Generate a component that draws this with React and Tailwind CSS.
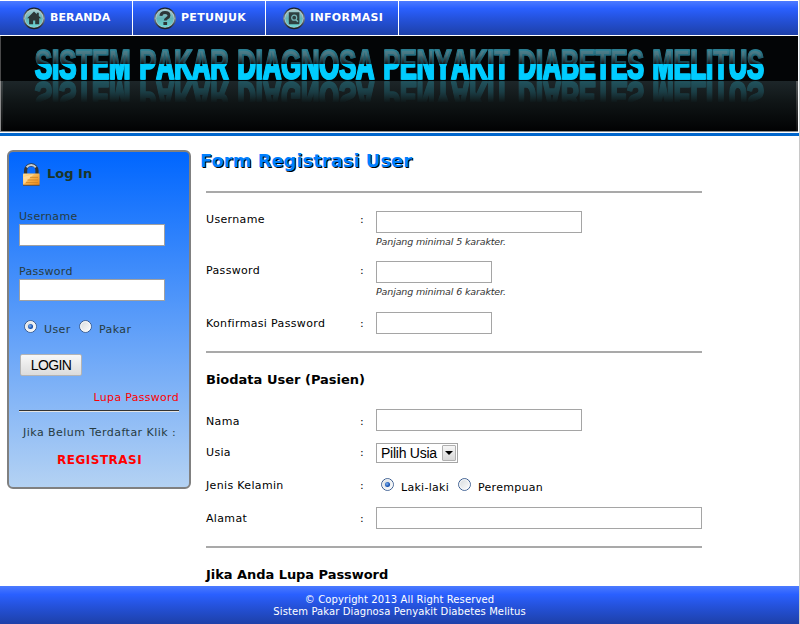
import React from "react";

const BAR =
  "bg-[linear-gradient(to_bottom,#4c7bff_0%,#2a60ff_22%,#2553de_50%,#1d40a8_100%)]";

function HomeGlyph() {
  return (
    <path
      d="M11 4.6 4.2 11.2h1.9v6h4v-3.8h2.1v3.8h4v-6h1.9l-2.3-2.3V5.8h-2v1.4z"
      fill="#2c3637"
    />
  );
}

function HelpGlyph() {
  return (
    <g>
      <path
        d="M6.9 8.9c.1-2.3 1.8-3.4 4.1-3.4 2.4 0 4 1.1 4 3 0 2.7-3.8 2.5-3.8 5"
        fill="none"
        stroke="#2c3637"
        strokeWidth="2.9"
      />
      <rect x="9.4" y="15" width="3.7" height="3" fill="#2c3637" />
    </g>
  );
}

function InfoGlyph() {
  return (
    <g>
      <path d="M5.8 5.2h10.6v11c0 .6-.5 1-1 1H5.8z" fill="#2f4041" />
      <circle cx="11.2" cy="10.7" r="2.5" fill="none" stroke="#77b7b9" strokeWidth="1.2" />
      <path d="m13 12.7 1.9 2" stroke="#77b7b9" strokeWidth="1.4" />
    </g>
  );
}

function NavIcon({ id, children }) {
  return (
    <svg width="22" height="23" viewBox="0 0 22 23" className="shrink-0">
      <defs>
        <linearGradient id={`${id}-ring`} x1="0" y1="0" x2="0" y2="1">
          <stop offset="0" stopColor="#101820" />
          <stop offset=".5" stopColor="#7c8b92" />
          <stop offset="1" stopColor="#12181c" />
        </linearGradient>
        <linearGradient id={`${id}-face`} x1="0" y1="0" x2="0" y2="1">
          <stop offset="0" stopColor="#a9cdd0" />
          <stop offset=".5" stopColor="#63b3b6" />
          <stop offset="1" stopColor="#6cd6d5" />
        </linearGradient>
      </defs>
      <circle cx="11" cy="11.4" r="10.9" fill={`url(#${id}-ring)`} />
      <circle cx="11" cy="11.2" r="9.5" fill="#b9c9cb" />
      <circle cx="11" cy="11.4" r="8.8" fill={`url(#${id}-face)`} />
      {children}
    </svg>
  );
}

function NavItem({ className, labelClass, label, id, children }) {
  return (
    <div className={`flex h-[34px] shrink-0 border-r border-white ${className}`}>
      <div className="pt-[6px]">
        <NavIcon id={id}>{children}</NavIcon>
      </div>
      <span
        className={`ml-[5px] pt-[10px] text-[11px] leading-[14px] font-bold text-white ${labelClass}`}
      >
        {label}
      </span>
    </div>
  );
}

// Each word: text, left edge, drawn width, natural advance in em.
const WORDS = [
  ["SISTEM", 34.5, 95.5, 3.723],
  ["PAKAR", 139, 89, 3.555],
  ["DIAGNOSA", 237, 137, 5.389],
  ["PENYAKIT", 383, 126, 5.056],
  ["DIABETES", 517.5, 126, 5.056],
  ["MELITUS", 652, 111.5, 4.389],
];

const SIZE = 42.5;

function Banner() {
  return (
    <svg width="798" height="96" viewBox="0 0 798 96" className="block">
      <defs>
        <linearGradient id="words" gradientUnits="userSpaceOnUse" x1="0" y1="-31" x2="0" y2="1">
          <stop offset="0" stopColor="#4a8b9b" />
          <stop offset=".22" stopColor="#49717b" />
          <stop offset=".49" stopColor="#17191b" />
          <stop offset=".5" stopColor="#00ccff" />
          <stop offset="1" stopColor="#00ccff" />
        </linearGradient>
        <linearGradient id="edge" gradientUnits="userSpaceOnUse" x1="0" y1="-31" x2="0" y2="1">
          <stop offset="0" stopColor="#2f8ba0" />
          <stop offset=".49" stopColor="#15414d" />
          <stop offset=".5" stopColor="#00ccff" />
          <stop offset="1" stopColor="#00ccff" />
        </linearGradient>
        <linearGradient id="fade" x1="0" y1="1" x2="0" y2="0">
          <stop offset="0" stopColor="#fff" stopOpacity=".48" />
          <stop offset=".35" stopColor="#fff" stopOpacity=".3" />
          <stop offset=".65" stopColor="#fff" stopOpacity="0" />
        </linearGradient>
        <mask id="fade-mask" maskUnits="userSpaceOnUse" x="0" y="10" width="798" height="35">
          <rect y="10" width="798" height="35" fill="url(#fade)" />
        </mask>
        <linearGradient id="floor" x1="0" y1="0" x2="0" y2="1">
          <stop offset="0" stopColor="#1d2629" />
          <stop offset=".4" stopColor="#101617" />
          <stop offset="1" stopColor="#010203" />
        </linearGradient>
        <linearGradient id="side" x1="0" y1="0" x2="0" y2="1">
          <stop offset="0" stopColor="#8c8c8c" />
          <stop offset="1" stopColor="#222" />
        </linearGradient>
        <filter id="heavy" colorInterpolationFilters="sRGB">
          <feOffset in="SourceGraphic" dx="1" dy="0" result="shifted" />
          <feMerge>
            <feMergeNode in="shifted" />
            <feMergeNode in="SourceGraphic" />
          </feMerge>
        </filter>
        <filter id="tint" x="0" y="0" width="1" height="1">
          <feFlood floodColor="#26899d" />
          <feComposite in2="SourceAlpha" operator="in" />
        </filter>
      </defs>
      <rect width="798" height="96" fill="#030506" />
      <rect y="45" width="798" height="50" fill="url(#floor)" />
      <rect width="1" height="95" fill="#4a4a4a" />
      <rect y="45" width="1" height="50" fill="#8c8c8c" />
      <rect x="1" y="45" width="2" height="50" fill="url(#side)" opacity=".3" />
      <rect x="796" y="45" width="2" height="50" fill="url(#side)" opacity=".5" />
      <g
        id="banner-words"
        fontFamily="'Liberation Sans', Arial, sans-serif"
        fontWeight="700"
        fontSize={SIZE}
        fill="url(#words)"
        stroke="url(#edge)"
        strokeWidth="1.6"
        filter="url(#heavy)"
        style={{ fontKerning: "none" }}
      >
        {WORDS.map(([word, x, width, em]) => (
          <text
            key={word}
            transform={`translate(${x} 43) scale(${width / (em * SIZE)} 1)`}
          >
            {word}
          </text>
        ))}
      </g>
      <g transform="translate(0 89) scale(1 -1)" mask="url(#fade-mask)">
        <use href="#banner-words" filter="url(#tint)" />
      </g>
      <rect y="95" width="798" height="1" fill="#8e8e8e" />
    </svg>
  );
}

function Radio({ checked, id }) {
  return (
    <svg width="13" height="13" viewBox="0 0 13 13" className="shrink-0">
      <defs>
        <linearGradient id={id} x1="0" y1="0" x2="1" y2="1">
          <stop offset="0" stopColor="#d4d9dc" />
          <stop offset="1" stopColor="#fff" />
        </linearGradient>
        <radialGradient id={`${id}-dot`} cx=".4" cy=".4">
          <stop offset="0" stopColor="#7fb5f2" />
          <stop offset="1" stopColor="#154fae" />
        </radialGradient>
      </defs>
      <circle cx="6.5" cy="6.5" r="5.9" fill={`url(#${id})`} stroke="#375a8f" strokeWidth="1" />
      <circle cx="6.5" cy="6.5" r="4.9" fill="none" stroke="#fff" strokeWidth=".8" />
      {checked && <circle cx="6.5" cy="6.5" r="2.5" fill={`url(#${id}-dot)`} />}
    </svg>
  );
}

function Lock() {
  return (
    <svg width="20" height="24" viewBox="0 0 20 24" className="shrink-0">
      <defs>
        <linearGradient id="gold" x1="0" y1="0" x2="1" y2="1">
          <stop offset="0" stopColor="#ffdf9a" />
          <stop offset=".5" stopColor="#f9b24a" />
          <stop offset="1" stopColor="#e98212" />
        </linearGradient>
      </defs>
      <path d="M3.6 12V7.6a5.7 5.7 0 0 1 11.4 0V12" fill="none" stroke="#2e3338" strokeWidth="3.2" />
      <path d="M4.6 4.4a5.6 5.6 0 0 1 9.2-.1" fill="none" stroke="#c4ccd2" strokeWidth="2" />
      <rect x="1" y="10.6" width="16.6" height="11.4" rx=".8" fill="url(#gold)" />
      <path d="M1.4 21.5V14L12 11z" fill="#ffe9bd" opacity=".55" />
      <path d="M8 14.4h8M5.5 17H16M4 19.5h12" stroke="#ce8426" strokeWidth=".8" />
      <path d="M1 22.3h16.6" stroke="#6b4a22" strokeWidth=".9" />
    </svg>
  );
}

function Sidebar() {
  return (
    <aside className="h-[339px] w-[184px] shrink-0 rounded-[6px] border-2 border-[#808080] bg-[linear-gradient(to_bottom,#0066ff,#b4d2f3)] px-[10px] text-[11px] leading-[14px] text-[#263b42]">
      <div className="flex h-[55px] pt-[11px]">
        <div className="ml-[3px]">
          <Lock />
        </div>
        <h2 className="ml-[5px] pt-[4px] text-[13px] leading-[14px] font-bold text-[#1b3529]">
          Log In
        </h2>
      </div>
      <div className="h-[17px] pt-[3px] tracking-[0.3px]">Username</div>
      <div className="h-[22px] w-[146px] border border-[#a0a0a0] bg-white" />
      <div className="h-[33px] pt-[19px] tracking-[0.3px]">Password</div>
      <div className="h-[22px] w-[146px] border border-[#a0a0a0] bg-white" />
      <div className="flex h-[53px] pt-[19px] pl-[5px] tracking-[0.4px]">
        <Radio id="side-user" checked />
        <span className="mt-[3px] ml-[7px] w-[29px]">User</span>
        <span className="ml-[6px]">
          <Radio id="side-pakar" />
        </span>
        <span className="mt-[3px] ml-[7px]">Pakar</span>
      </div>
      <div className="ml-px flex h-[22px] w-[62px] items-center justify-center rounded-[2px] border border-[#b4b4b4] bg-linear-to-b from-[#f8f8f8] to-[#dcdcdc] font-['Liberation_Sans',Arial,sans-serif] text-[14px] leading-[16px] tracking-[-0.6px] text-black">
        LOGIN
      </div>
      <div className="flex h-[34px] w-[160px] justify-end pt-[15px] tracking-[0.3px] whitespace-nowrap text-[#ff0000]">
        Lupa Password
      </div>
      <div className="h-[2px] w-[160px] border-t border-b border-t-[#333] border-b-[#e4e4e4]" />
      <div className="h-[34px] pt-[14px] pl-[4px] tracking-[0.47px] whitespace-nowrap">
        Jika Belum Terdaftar Klik :
      </div>
      <div className="pl-[38px] text-[12px] leading-[28px] font-bold tracking-[0.5px] text-[#ff0000]">
        REGISTRASI
      </div>
    </aside>
  );
}

function Row({ label, className, labelClass, children }) {
  return (
    <div className={`grid grid-cols-[154px_16px_326px] ${className}`}>
      <span className={`whitespace-nowrap ${labelClass}`}>{label}</span>
      <span className={labelClass}>:</span>
      <div>{children}</div>
    </div>
  );
}

const FIELD = "h-[22px] border border-[#a5a5a5] bg-white";
const HINT = "pt-[3px] text-[9.5px] leading-[12px] italic tracking-[-0.14px] text-[#333]";

function Main() {
  return (
    <main className="ml-[9px] w-[502px] text-[11px] leading-[14px] tracking-[0.34px] text-black">
      <h1 className="h-[41px] text-[18px] leading-[22px] font-bold tracking-[-0.04px] whitespace-nowrap text-[#0080ff] [text-shadow:1px_1px_0_#000]">
        Form Registrasi User
      </h1>
      <div className="ml-[6px] w-[496px]">
        <div className="mb-[18px] h-[2px] bg-[#a9a9a9]" />
        <Row label="Username" className="h-[50px]" labelClass="pt-[2px]">
          <div className={`${FIELD} w-[206px]`} />
          <div className={HINT}>Panjang minimal 5 karakter.</div>
        </Row>
        <Row label="Password" className="h-[51px]" labelClass="pt-[3px]">
          <div className={`${FIELD} w-[116px]`} />
          <div className={HINT}>Panjang minimal 6 karakter.</div>
        </Row>
        <Row label="Konfirmasi Password" className="h-[39px]" labelClass="pt-[5px]">
          <div className={`${FIELD} w-[116px]`} />
        </Row>
        <div className="h-[2px] bg-[#a9a9a9]" />
        <h3 className="h-[56px] pt-[19px] text-[13px] leading-[16px] font-bold tracking-normal">
          Biodata User (Pasien)
        </h3>
        <Row label="Nama" className="h-[34px]" labelClass="pt-[6px]">
          <div className={`${FIELD} w-[206px]`} />
        </Row>
        <Row label="Usia" className="h-[34px]" labelClass="pt-[3px]">
          <div className="flex h-[20px] w-[82px] items-center justify-between border border-[#a5a5a5] bg-white pr-px pl-[4px] font-['Liberation_Sans',Arial,sans-serif] text-[14px] leading-[16px] tracking-[-0.25px]">
            <span className="whitespace-nowrap">Pilih Usia</span>
            <span className="flex h-[16px] w-[14px] items-center justify-center rounded-[1px] border border-[#b0b0b0] bg-linear-to-b from-[#f6f6f6] to-[#d8d8d8]">
              <svg width="8" height="4" viewBox="0 0 8 4">
                <path d="M0 0h8L4 4z" fill="#000" />
              </svg>
            </span>
          </div>
        </Row>
        <Row label="Jenis Kelamin" className="h-[30px]" labelClass="pt-[2px]">
          <div className="flex pl-[5px] tracking-[0.28px]">
            <span className="mt-px">
              <Radio id="male" checked />
            </span>
            <span className="mt-[4px] ml-[7px] w-[49px] whitespace-nowrap">Laki-laki</span>
            <span className="mt-px ml-[8px]">
              <Radio id="female" />
            </span>
            <span className="mt-[4px] ml-[7px]">Perempuan</span>
          </div>
        </Row>
        <Row label="Alamat" className="h-[39px]" labelClass="pt-[5px]">
          <div className={`${FIELD} w-[326px]`} />
        </Row>
        <div className="h-[2px] bg-[#a9a9a9]" />
        <h3 className="pt-[19px] text-[13px] leading-[16px] font-bold tracking-[-0.05px]">
          Jika Anda Lupa Password
        </h3>
      </div>
    </main>
  );
}

export default function App() {
  return (
    <div className="flex h-[624px] w-[800px] flex-col overflow-hidden border-r border-[#c8c8c8] bg-white font-['DejaVu_Sans',Verdana,sans-serif]">
      <nav className={`mt-px flex h-[34px] w-[798px] shrink-0 ${BAR}`}>
        <NavItem id="home" label="BERANDA" className="w-[133px] pl-[23px]" labelClass="tracking-[0.1px]">
          <HomeGlyph />
        </NavItem>
        <NavItem id="help" label="PETUNJUK" className="w-[133px] pl-[21px]" labelClass="tracking-[0.3px]">
          <HelpGlyph />
        </NavItem>
        <NavItem id="info" label="INFORMASI" className="w-[133px] pl-[17px]" labelClass="tracking-[0.35px]">
          <InfoGlyph />
        </NavItem>
      </nav>
      <header className="mt-px shrink-0">
        <Banner />
      </header>
      <div className="mt-px h-[3px] shrink-0 bg-[#0066cc]" />
      <div className="flex h-[450px] shrink-0 items-start overflow-hidden pt-[14px] pl-[7px]">
        <Sidebar />
        <Main />
      </div>
      <footer
        className={`h-[38px] w-[799px] shrink-0 pt-[8px] text-center text-[10px] leading-[12px] tracking-[0.11px] text-white ${BAR}`}
      >
        <p>© Copyright 2013 All Right Reserved</p>
        <p>Sistem Pakar Diagnosa Penyakit Diabetes Melitus</p>
      </footer>
    </div>
  );
}
